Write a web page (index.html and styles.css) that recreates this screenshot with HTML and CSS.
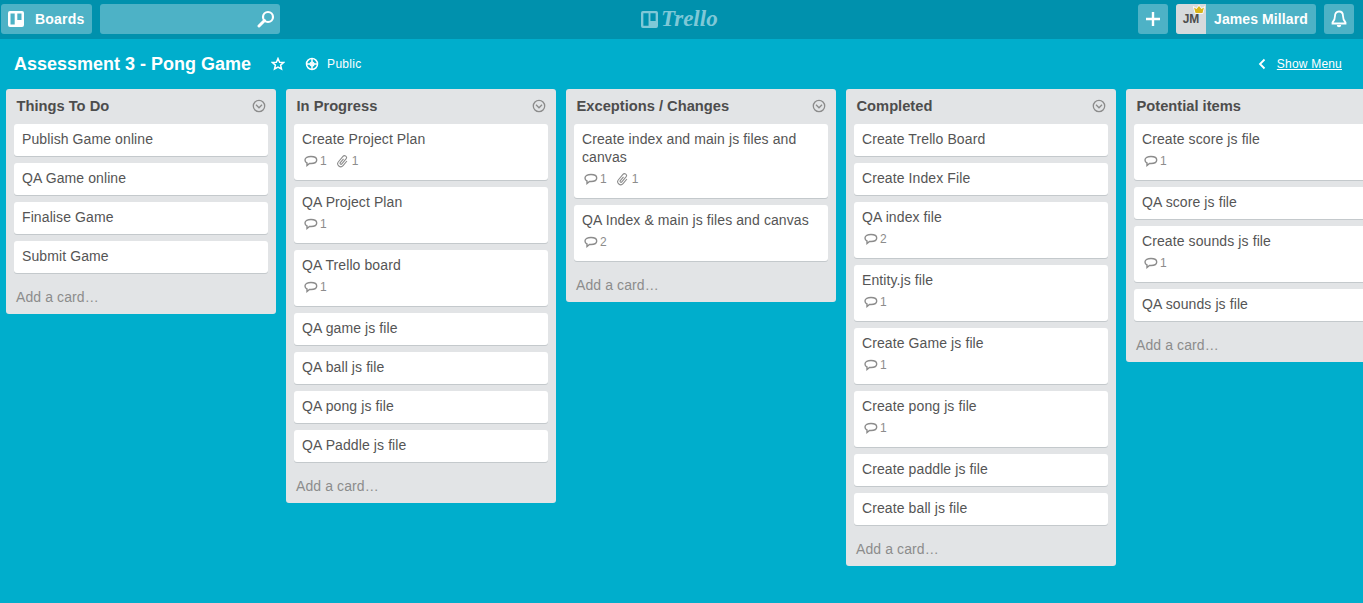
FILE: index.html
```html
<!DOCTYPE html>
<html lang="en">

<head>
    <meta charset="UTF-8">
    <title>Assessment 3 - Pong Game</title>
    <link rel="stylesheet" href="styles.css">
</head>

<body>
    <svg class="icon-defs" width="0" height="0">
        <symbol id="comment" viewBox="0 -1 14 14">
            <path d="M7 1.500c3.200 0 5.700 1.400 5.700 3.500S10.200 8.500 7 8.500H5.500L3 10.500V8C1.700 7.500 1 6.300 1 5 1 2.900 3.800 1.500 7 1.500z" fill="none" stroke="currentColor" stroke-width="1.400" />
        </symbol>
        <symbol id="clip" viewBox="0 0 14 14">
            <path transform="rotate(40 7 7)" d="M10 4.500v6a3 3 0 0 1-6 0v-7a2 2 0 0 1 4 0v6.500a1 1 0 0 1-2 0V5" fill="none" stroke="currentColor" stroke-width="1.100" />
        </symbol>
        <symbol id="chevron-circle" viewBox="0 0 14 14">
            <circle cx="7" cy="7" r="5.700" fill="none" stroke="currentColor" stroke-width="1.300" />
            <path d="M4 5.800 7 8.800l3-3" fill="none" stroke="currentColor" stroke-width="1.300" />
        </symbol>
    </svg>

    <header class="topbar">
        <div class="topbar-left">
            <a class="btn boards-btn">
                <svg class="boards-icon" viewBox="0 0 16 16">
                    <path fill-rule="evenodd" d="M2 0h12a2 2 0 0 1 2 2v12a2 2 0 0 1-2 2H2a2 2 0 0 1-2-2V2a2 2 0 0 1 2-2zm.500 2.500v11h4.200v-11zm6.800 0v6.500h4.200V2.500z" fill="#fff" />
                </svg>
                <span>Boards</span>
            </a>
            <div class="search">
                <svg class="search-icon" viewBox="0 0 18 18">
                    <circle cx="11" cy="7" r="5" fill="none" stroke="#fff" stroke-width="2.200" />
                    <path d="M7.500 10.500 2 16" stroke="#fff" stroke-width="3" stroke-linecap="round" />
                </svg>
            </div>
        </div>

        <div class="logo">
            <svg class="logo-icon" viewBox="0 0 18 18">
                <path fill-rule="evenodd" d="M2 0h14a2 2 0 0 1 2 2v14a2 2 0 0 1-2 2H2a2 2 0 0 1-2-2V2a2 2 0 0 1 2-2zm.500 2.500v13h5.500v-13zm7.500 0v8h5.500v-8z" fill="#7fc8d7" />
            </svg>
            <span>Trello</span>
        </div>

        <div class="topbar-right">
            <a class="btn square-btn">
                <svg class="plus-icon" viewBox="0 0 16 16">
                    <path d="M8 1v14M1 8h14" stroke="#fff" stroke-width="2.400" />
                </svg>
            </a>
            <a class="btn member-btn">
                <span class="avatar">JM
                    <svg class="crown" viewBox="0 0 14 11">
                        <path d="M2 3.500 4.500 5 7 2l2.500 3L12 3.500 10.500 9h-7z" fill="#d9b51c" stroke="#fff" stroke-width="1.500" paint-order="stroke" />
                    </svg>
                </span>
                <span class="member-name">James Millard</span>
            </a>
            <a class="btn square-btn">
                <svg class="bell-icon" viewBox="0 0 16 18">
                    <path d="M8 1.500c2.800 0 4 2 4 4.500 0 3.500 1 5 2.500 6.500v1h-13v-1C3 11 4 9.500 4 6c0-2.500 1.200-4.500 4-4.500z" fill="none" stroke="#fff" stroke-width="1.800" />
                    <path d="M5.800 15h4.400a2.200 2.200 0 0 1-4.400 0z" fill="#fff" />
                </svg>
            </a>
        </div>
    </header>

    <div class="board-header">
        <h1>Assessment 3 - Pong Game</h1>
        <svg class="star-icon" viewBox="0 0 14 14">
            <path d="M7 1.500 8.600 5.200l4 .3-3 2.600.9 3.900L7 10l-3.500 2 .9-3.900-3-2.600 4-.3z" fill="none" stroke="#fff" stroke-width="1.500" />
        </svg>
        <span class="visibility">
            <svg class="globe-icon" viewBox="0 0 14 14">
                <circle cx="7" cy="7" r="5.500" fill="none" stroke="#fff" stroke-width="1.500" />
                <path d="M7 1.500v11M1.500 7h11" stroke="#fff" stroke-width="1.500" />
                <circle cx="7" cy="7" r="2" fill="none" stroke="#fff" stroke-width="1.200" />
            </svg>
            Public
        </span>
        <a class="show-menu">
            <svg class="back-icon" viewBox="0 0 8 12">
                <path d="M6.500 1.500 2 6l4.500 4.500" fill="none" stroke="#fff" stroke-width="1.800" />
            </svg>
            <span>Show Menu</span>
        </a>
    </div>

    <main class="board">
        <section class="list">
            <div class="list-head"><h2>Things To Do</h2><svg class="list-menu"><use href="#chevron-circle" /></svg></div>
            <div class="card">Publish Game online</div>
            <div class="card">QA Game online</div>
            <div class="card">Finalise Game</div>
            <div class="card">Submit Game</div>
            <a class="add-card">Add a card…</a>
        </section>

        <section class="list">
            <div class="list-head"><h2>In Progress</h2><svg class="list-menu"><use href="#chevron-circle" /></svg></div>
            <div class="card">Create Project Plan
                <div class="badges">
                    <span class="badge"><svg><use href="#comment" /></svg>1</span>
                    <span class="badge"><svg><use href="#clip" /></svg>1</span>
                </div>
            </div>
            <div class="card">QA Project Plan
                <div class="badges"><span class="badge"><svg><use href="#comment" /></svg>1</span></div>
            </div>
            <div class="card">QA Trello board
                <div class="badges"><span class="badge"><svg><use href="#comment" /></svg>1</span></div>
            </div>
            <div class="card">QA game js file</div>
            <div class="card">QA ball js file</div>
            <div class="card">QA pong js file</div>
            <div class="card">QA Paddle js file</div>
            <a class="add-card">Add a card…</a>
        </section>

        <section class="list">
            <div class="list-head"><h2>Exceptions / Changes</h2><svg class="list-menu"><use href="#chevron-circle" /></svg></div>
            <div class="card">Create index and main js files and canvas
                <div class="badges">
                    <span class="badge"><svg><use href="#comment" /></svg>1</span>
                    <span class="badge"><svg><use href="#clip" /></svg>1</span>
                </div>
            </div>
            <div class="card">QA Index &amp; main js files and canvas
                <div class="badges"><span class="badge"><svg><use href="#comment" /></svg>2</span></div>
            </div>
            <a class="add-card">Add a card…</a>
        </section>

        <section class="list">
            <div class="list-head"><h2>Completed</h2><svg class="list-menu"><use href="#chevron-circle" /></svg></div>
            <div class="card">Create Trello Board</div>
            <div class="card">Create Index File</div>
            <div class="card">QA index file
                <div class="badges"><span class="badge"><svg><use href="#comment" /></svg>2</span></div>
            </div>
            <div class="card">Entity.js file
                <div class="badges"><span class="badge"><svg><use href="#comment" /></svg>1</span></div>
            </div>
            <div class="card">Create Game js file
                <div class="badges"><span class="badge"><svg><use href="#comment" /></svg>1</span></div>
            </div>
            <div class="card">Create pong js file
                <div class="badges"><span class="badge"><svg><use href="#comment" /></svg>1</span></div>
            </div>
            <div class="card">Create paddle js file</div>
            <div class="card">Create ball js file</div>
            <a class="add-card">Add a card…</a>
        </section>

        <section class="list">
            <div class="list-head"><h2>Potential items</h2><svg class="list-menu"><use href="#chevron-circle" /></svg></div>
            <div class="card">Create score js file
                <div class="badges"><span class="badge"><svg><use href="#comment" /></svg>1</span></div>
            </div>
            <div class="card">QA score js file</div>
            <div class="card">Create sounds js file
                <div class="badges"><span class="badge"><svg><use href="#comment" /></svg>1</span></div>
            </div>
            <div class="card">QA sounds js file</div>
            <a class="add-card">Add a card…</a>
        </section>
    </main>
</body>

</html>
```

FILE: styles.css
```css
html,
body {
    height: 100%;
}

body {
    margin: 0;
    font-family: "Liberation Sans", Arial, sans-serif;
    font-size: 14px;
    line-height: 18px;
    color: #555;
    background-color: #00aecc;
    overflow: hidden;
}

.icon-defs {
    display: none;
}

.topbar {
    display: flex;
    justify-content: space-between;
    align-items: flex-start;
    height: 39px;
    padding: 4px 9px 0 1px;
    background-color: #0091ad;
    box-sizing: border-box;
    position: relative;
}

.topbar-left,
.topbar-right {
    display: flex;
    align-items: center;
    gap: 8px;
}

.btn {
    display: flex;
    align-items: center;
    height: 30px;
    border-radius: 3px;
    color: #fff;
    font-weight: bold;
    background-color: #4db2c6;
}

.boards-btn {
    width: 91px;
    box-sizing: border-box;
    padding-left: 7px;
    gap: 11px;
    letter-spacing: .2px;
}

.boards-icon {
    width: 16px;
    height: 16px;
}

.search {
    display: flex;
    justify-content: flex-end;
    align-items: center;
    width: 180px;
    height: 30px;
    box-sizing: border-box;
    padding-right: 5px;
    border-radius: 3px;
    background-color: #4db2c6;
}

.search-icon {
    width: 18px;
    height: 18px;
}

.logo {
    display: flex;
    align-items: center;
    gap: 3px;
    position: absolute;
    left: 641px;
    top: 7px;
    color: #7fc8d7;
    font-family: "Liberation Serif", serif;
    font-style: italic;
    font-weight: bold;
    font-size: 23px;
    line-height: 24px;
}

.logo-icon {
    width: 17px;
    height: 17px;
}

.square-btn {
    justify-content: center;
    width: 30px;
}

.plus-icon {
    width: 16px;
    height: 16px;
}

.bell-icon {
    width: 16px;
    height: 18px;
}

.member-btn {
    width: 140px;
    overflow: hidden;
}

.avatar {
    display: flex;
    justify-content: center;
    align-items: center;
    width: 30px;
    height: 30px;
    flex: none;
    position: relative;
    background-color: #d6dadc;
    color: #4d4d4d;
    font-size: 12px;
}

.crown {
    position: absolute;
    right: 0;
    top: 0;
    width: 14px;
    height: 11px;
}

.member-name {
    margin-left: 8px;
    white-space: nowrap;
    letter-spacing: .1px;
}

.board-header {
    display: flex;
    align-items: center;
    height: 50px;
    padding: 0 21px 0 14px;
    color: #fff;
}

.board-header h1 {
    margin: 0;
    font-size: 18px;
    line-height: 22px;
    font-weight: bold;
}

.star-icon {
    width: 14px;
    height: 14px;
    margin-left: 20px;
}

.visibility {
    display: flex;
    align-items: center;
    gap: 8px;
    margin-left: 20px;
    font-size: 12px;
    letter-spacing: .3px;
}

.globe-icon {
    width: 14px;
    height: 14px;
}

.show-menu {
    display: flex;
    align-items: center;
    gap: 11px;
    margin-left: auto;
    font-size: 12px;
    letter-spacing: .2px;
}

.show-menu span {
    text-decoration: underline;
}

.back-icon {
    width: 8px;
    height: 12px;
}

.board {
    display: flex;
    align-items: flex-start;
    gap: 10px;
    padding-left: 6px;
}

.list {
    flex: none;
    width: 270px;
    box-sizing: border-box;
    padding: 0 8px;
    border-radius: 3px;
    background-color: #e2e4e6;
}

.list-head {
    display: flex;
    justify-content: space-between;
    align-items: center;
    height: 35px;
    box-sizing: border-box;
    padding: 0 2px 2px 2.500px;
}

.list-head h2 {
    margin: 0;
    font-size: 14.700px;
    line-height: 18px;
    font-weight: bold;
    color: #4d4d4d;
}

.list-menu {
    width: 14px;
    height: 14px;
    color: #8c8c8c;
}

.card {
    margin-bottom: 7px;
    padding: 6px 8px 8px;
    border-radius: 3px;
    background-color: #fff;
    box-shadow: 0 1px 0 #c4c9cc;
    letter-spacing: .1px;
}

.badges {
    display: flex;
    gap: 9px;
    height: 24px;
    box-sizing: border-box;
    align-items: center;
    padding: 2px 0 0 2px;
    color: #8c8c8c;
    font-size: 12px;
}

.badge {
    display: flex;
    align-items: center;
    gap: 2px;
}

.badge svg {
    width: 14px;
    height: 14px;
}

.add-card {
    display: block;
    padding: 8px 2px;
    height: 18px;
    color: #8c8c8c;
    letter-spacing: .1px;
}
```
